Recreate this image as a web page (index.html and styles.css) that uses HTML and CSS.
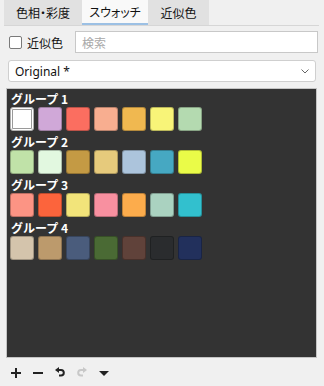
FILE: index.html
```html
<!doctype html>
<html lang="ja">
<head>
    <meta charset="UTF-8">
    <title>スウォッチ</title>
    <link rel="stylesheet" href="styles.css">
</head>
<body>
<div class="tabs">
    <div class="tab tab1">色相・彩度</div>
    <div class="tab tab2 active">スウォッチ</div>
    <div class="tab tab3">近似色</div>
</div>

<div class="searchRow">
    <label class="check"><span class="box"></span>近似色</label>
    <input class="search" type="text" placeholder="検索">
</div>

<div class="select">
    <span>Original *</span>
    <svg width="8" height="5" viewBox="0 0 8 5"><path d="M0.5 0.5 L4 4 L7.5 0.5" fill="none" stroke="#666" stroke-width="1"/></svg>
</div>

<div class="panel">
    <div class="group">
        <div class="groupTitle">グループ 1</div>
        <div class="swatches">
            <span class="sw selected" style="background:#ffffff"></span>
            <span class="sw" style="background:#d0a8d8"></span>
            <span class="sw" style="background:#fb6e60"></span>
            <span class="sw" style="background:#f8ae90"></span>
            <span class="sw" style="background:#f0b850"></span>
            <span class="sw" style="background:#f8f478"></span>
            <span class="sw" style="background:#b4dab0"></span>
        </div>
    </div>
    <div class="group">
        <div class="groupTitle">グループ 2</div>
        <div class="swatches">
            <span class="sw" style="background:#c0e2a8"></span>
            <span class="sw" style="background:#e2f8e0"></span>
            <span class="sw" style="background:#c49a44"></span>
            <span class="sw" style="background:#e6ca7c"></span>
            <span class="sw" style="background:#acc4dc"></span>
            <span class="sw" style="background:#46a8c2"></span>
            <span class="sw" style="background:#eafb48"></span>
        </div>
    </div>
    <div class="group">
        <div class="groupTitle">グループ 3</div>
        <div class="swatches">
            <span class="sw" style="background:#fc9484"></span>
            <span class="sw" style="background:#fc643c"></span>
            <span class="sw" style="background:#f2e47a"></span>
            <span class="sw" style="background:#f890a0"></span>
            <span class="sw" style="background:#fcac4c"></span>
            <span class="sw" style="background:#aad2c0"></span>
            <span class="sw" style="background:#32c0ce"></span>
        </div>
    </div>
    <div class="group">
        <div class="groupTitle">グループ 4</div>
        <div class="swatches">
            <span class="sw" style="background:#d4c4ac"></span>
            <span class="sw" style="background:#bc9a6c"></span>
            <span class="sw" style="background:#4a5c7c"></span>
            <span class="sw" style="background:#4a6a34"></span>
            <span class="sw" style="background:#60423a"></span>
            <span class="sw" style="background:#2a2c2e"></span>
            <span class="sw" style="background:#22305c"></span>
        </div>
    </div>
</div>

<div class="toolbar">
    <svg class="icon" width="12" height="12" viewBox="0 0 12 12"><path d="M6 1 V11 M1 6 H11" stroke="#222" stroke-width="2"/></svg>
    <svg class="icon" width="12" height="12" viewBox="0 0 12 12"><path d="M1 6 H11" stroke="#222" stroke-width="2"/></svg>
    <svg class="icon" width="12" height="12" viewBox="0 0 12 12"><path d="M4 3 H7 A2.8 2.8 0 0 1 7 8.6 H5" fill="none" stroke="#222" stroke-width="2"/><path d="M1 3 L5 0 V6 Z" fill="#222"/></svg>
    <svg class="icon" width="12" height="12" viewBox="0 0 12 12"><path d="M8 3 H5 A2.8 2.8 0 0 0 5 8.6 H7" fill="none" stroke="#c8c8c8" stroke-width="2"/><path d="M11 3 L7 0 V6 Z" fill="#c8c8c8"/></svg>
    <svg class="icon" width="12" height="12" viewBox="0 0 12 12"><path d="M1 4 H11 L6 9 Z" fill="#222"/></svg>
</div>
</body>
</html>
```

FILE: styles.css
```css
body {
    margin: 0;
    background-color: #f0f0f0;
    font-family: "Noto Sans", "Noto Sans CJK JP", sans-serif;
    font-size: 12px;
    color: #111;
    width: 324px;
    height: 386px;
    overflow: hidden;
}
.tabs {
    display: flex;
    margin: 0 5px 0 4px;
    height: 25px;
    border-bottom: 1px solid #d6d6d6;
}
.tab {
    display: flex;
    align-items: center;
    justify-content: center;
    box-sizing: border-box;
    height: 25px;
    background-color: #e1e1e1;
    font-family: "Noto Sans CJK JP", sans-serif;
    font-feature-settings: "palt";
}
.tab1 {
    width: 78px;
}
.tab2 {
    width: 66px;
    background-color: #f9f9f9;
    border-bottom: 2px solid #9cc0e4;
}
.tab3 {
    width: 61px;
}
.searchRow {
    display: flex;
    align-items: center;
    margin: 5px 6px 0 9px;
    height: 22px;
}
.check {
    display: flex;
    align-items: center;
    gap: 5px;
    width: 66px;
    font-family: "Noto Sans CJK JP", sans-serif;
}
.box {
    width: 11px;
    height: 11px;
    border: 1px solid #7a7a7a;
    border-radius: 2px;
    background-color: #fff;
}
.search {
    flex: 1;
    box-sizing: border-box;
    height: 22px;
    margin: 0;
    padding: 0 6px;
    border: 1px solid #c8c8c8;
    background-color: #fff;
    font-family: "Noto Sans CJK JP", sans-serif;
    font-size: 12px;
    outline: none;
}
.search::placeholder {
    color: #a8a8a8;
}
.select {
    display: flex;
    align-items: center;
    justify-content: space-between;
    box-sizing: border-box;
    height: 22px;
    margin: 7px 8px 0 8px;
    padding: 0 6px 0 6px;
    border: 1px solid #cfcfcf;
    border-radius: 3px;
    background-color: #fff;
    font-size: 12px;
}
.panel {
    box-sizing: border-box;
    height: 270px;
    margin: 6px 7px 0 6px;
    padding: 1px 3px;
    background-color: #333333;
    border: 1px solid #c4c4c4;
}
.groupTitle {
    height: 17px;
    line-height: 17px;
    color: #fff;
    font-weight: bold;
    font-family: "Noto Sans CJK JP", sans-serif;
    font-size: 12px;
    padding-left: 1px;
}
.swatches {
    display: flex;
    gap: 4px;
    height: 24px;
    margin-bottom: 2px;
}
.sw {
    box-sizing: border-box;
    width: 24px;
    height: 24px;
    border-radius: 3px;
    border: 1px solid rgba(0, 0, 0, 0.25);
}
.sw.selected {
    border: 1px solid #b0b0b0;
    box-shadow: inset 0 0 0 1px #fff, inset 0 0 0 2px #9a9a9a;
}
.toolbar {
    display: flex;
    align-items: center;
    gap: 10px;
    margin: 9px 0 0 10px;
    height: 12px;
}
.icon {
    display: block;
}
```
